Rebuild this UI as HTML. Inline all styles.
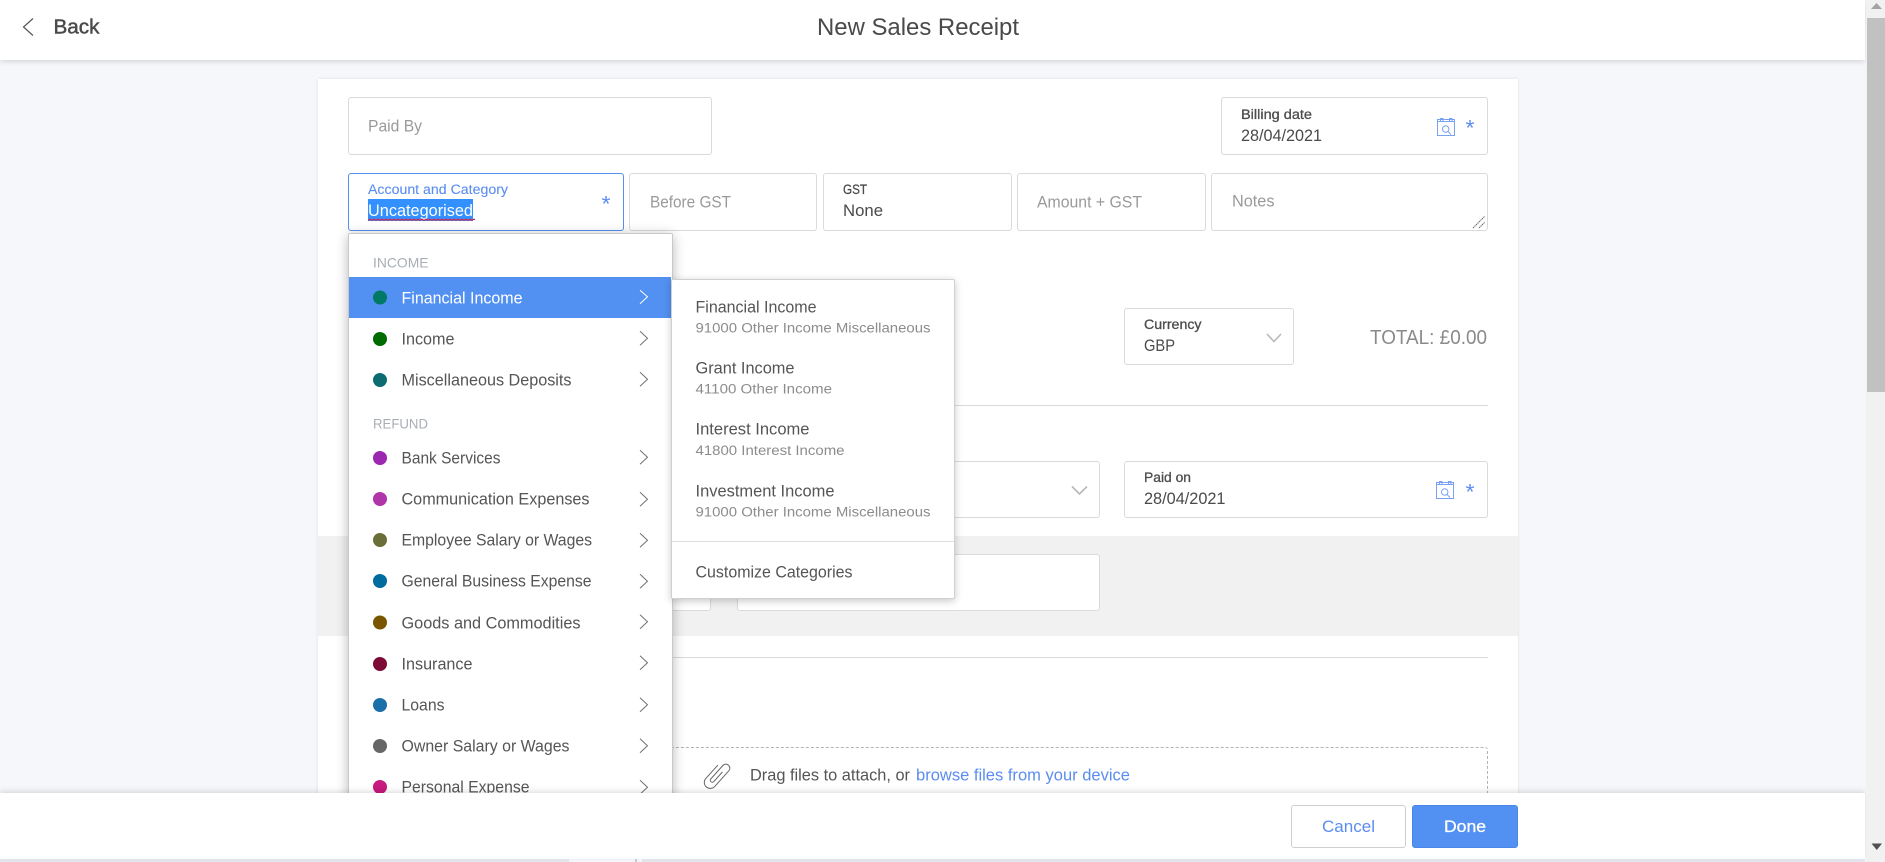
<!DOCTYPE html>
<html lang="en">
<head>
<meta charset="utf-8">
<title>New Sales Receipt</title>
<style>
html,body{margin:0;padding:0;width:1885px;height:862px;overflow:hidden;background:#f5f7fb;font-family:"Liberation Sans",sans-serif}
.a{position:absolute;box-sizing:border-box}
.f{background:#fff;border:1px solid #dadada;border-radius:3px}
svg{position:absolute;left:0;top:0;width:1885px;height:862px;overflow:visible;pointer-events:none}
text{font-family:"Liberation Sans",sans-serif;font-size:16.4px;fill:#4a4a4a}
.p{fill:#9a9a9a}
.l{font-size:13.4px;fill:#4d4d4d;stroke:#4d4d4d;stroke-width:.3px}
.h{font-size:14px;fill:#a8aeb5}.s{font-size:14.2px;fill:#8c8c8c}.m{fill:#555}
.b{fill:#5b8df0}.st{font-size:22px;fill:#5b8df0}
</style>
</head>
<body>
<div class="a" style="left:318px;top:79px;width:1200px;height:760px;background:#fff;box-shadow:0 0 3px rgba(0,0,0,.1)"></div>
<div class="a" style="left:0;top:0;width:1865px;height:60px;background:#fff;box-shadow:0 2px 5px rgba(0,0,0,.13)"></div>
<div class="a f" style="left:348px;top:97px;width:364px;height:58px"></div>
<div class="a f" style="left:1221px;top:97px;width:267px;height:58px"></div>
<div class="a" style="left:348px;top:173px;width:276px;height:58px;background:#fff;border:1px solid #5590f0;border-radius:3px"></div>
<div class="a f" style="left:629px;top:173px;width:188px;height:58px"></div>
<div class="a f" style="left:823px;top:173px;width:189px;height:58px"></div>
<div class="a f" style="left:1017px;top:173px;width:189px;height:58px"></div>
<div class="a f" style="left:1211px;top:173px;width:277px;height:58px"></div>
<div class="a f" style="left:1124px;top:308px;width:170px;height:57px"></div>
<div class="a" style="left:348px;top:405px;width:1140px;height:1px;background:#dadada"></div>
<div class="a f" style="left:348px;top:461px;width:752px;height:57px"></div>
<div class="a f" style="left:1124px;top:461px;width:364px;height:57px"></div>
<div class="a" style="left:318px;top:536px;width:1200px;height:100px;background:#f1f1f1"></div>
<div class="a f" style="left:500px;top:554px;width:211px;height:57px"></div>
<div class="a f" style="left:737px;top:554px;width:363px;height:57px"></div>
<div class="a" style="left:348px;top:657px;width:1140px;height:1px;background:#dadada"></div>
<div class="a" style="left:348px;top:747px;width:1140px;height:90px;border:1px dashed #aeb4ba;border-radius:3px"></div>

<svg viewBox="0 0 1885 862">
<path d="M33 18.5L23.5 27L33 35.5" fill="none" stroke="#555" stroke-width="1.2"/>
<text x="53.5" y="33.5" textLength="46" lengthAdjust="spacingAndGlyphs" style="font-size:20px;fill:#4a4a4a;stroke:#4a4a4a;stroke-width:.45px">Back</text>
<text x="817" y="35" textLength="202" lengthAdjust="spacingAndGlyphs" style="font-size:24.5px;fill:#4a4a4a">New Sales Receipt</text>
<text class="p" x="368" y="131.5" textLength="54" lengthAdjust="spacingAndGlyphs">Paid By</text>
<text class="l" x="1241" y="119" textLength="71" lengthAdjust="spacingAndGlyphs">Billing date</text>
<text x="1241" y="141" textLength="81" lengthAdjust="spacingAndGlyphs">28/04/2021</text>
<g fill="none" stroke="#7aa2f4" stroke-width="1">
<rect x="1437.5" y="119.5" width="17" height="16"/><path d="M1437.5 121.5H1454.5M1440.5 118.5h2.5v3h-2.5zM1449.5 118.5h2.5v3h-2.5z"/><circle cx="1445.7" cy="129" r="3.2"/><path d="M1448 131.5L1451 134.5"/>
<rect x="1436.5" y="482.5" width="17" height="16"/><path d="M1436.5 484.5H1453.5M1439.5 481.5h2.5v3h-2.5zM1448.5 481.5h2.5v3h-2.5z"/><circle cx="1444.7" cy="492" r="3.2"/><path d="M1447 494.5L1450 497.5"/>
</g>
<text class="st" x="1465.5" y="135.5" textLength="9" lengthAdjust="spacingAndGlyphs">*</text>
<text class="l" x="368" y="194" textLength="140" lengthAdjust="spacingAndGlyphs" style="fill:#5b8df0;stroke:#5b8df0;stroke-width:.1px">Account and Category</text>
<rect x="368" y="199" width="105" height="22" fill="#3390ff"/>
<text x="368" y="216" textLength="105" lengthAdjust="spacingAndGlyphs" style="fill:#fff">Uncategorised</text>
<path d="M368 220.5l2-1.5 2 1.5 2-1.5 2 1.5 2-1.5 2 1.5 2-1.5 2 1.5 2-1.5 2 1.5 2-1.5 2 1.5 2-1.5 2 1.5 2-1.5 2 1.5 2-1.5 2 1.5 2-1.5 2 1.5 2-1.5 2 1.5 2-1.5 2 1.5 2-1.5 2 1.5 2-1.5 2 1.5 2-1.5 2 1.5 2-1.5 2 1.5 2-1.5 2 1.5 2-1.5 2 1.5 2-1.5 2 1.5 2-1.5 2 1.5 2-1.5 2 1.5 2-1.5 2 1.5 2-1.5 2 1.5 2-1.5 2 1.5 2-1.5 2 1.5 2-1.5 2 1.5 2-1.5 1 .75" fill="none" stroke="#e0203a" stroke-width="1"/>
<text class="st" x="601.5" y="211.5" textLength="9" lengthAdjust="spacingAndGlyphs">*</text>
<text class="p" x="650" y="207.5" textLength="81" lengthAdjust="spacingAndGlyphs">Before GST</text>
<text class="l" x="843" y="194" textLength="24" lengthAdjust="spacingAndGlyphs">GST</text>
<text x="843" y="216" textLength="40" lengthAdjust="spacingAndGlyphs">None</text>
<text class="p" x="1037" y="207.5" textLength="105" lengthAdjust="spacingAndGlyphs">Amount + GST</text>
<text class="p" x="1232" y="206.5" textLength="42.5" lengthAdjust="spacingAndGlyphs">Notes</text>
<path d="M1473 228L1485 216M1479 228L1485 222" stroke="#666" stroke-width="1" stroke-dasharray="1.5 .6" fill="none"/>
<text class="l" x="1144" y="329" textLength="57.5" lengthAdjust="spacingAndGlyphs">Currency</text>
<text x="1144" y="351" textLength="31" lengthAdjust="spacingAndGlyphs">GBP</text>
<path d="M1267 334L1274 341.5L1281 334" fill="none" stroke="#b8b8b8" stroke-width="1.6"/>
<text x="1370" y="344" textLength="117" lengthAdjust="spacingAndGlyphs" style="font-size:20.5px;fill:#8a8a8a">TOTAL: £0.00</text>
<path d="M1072 486.5L1079.5 494L1087 486.5" fill="none" stroke="#b8b8b8" stroke-width="1.6"/>
<text class="l" x="1144" y="482" textLength="47" lengthAdjust="spacingAndGlyphs">Paid on</text>
<text x="1144" y="504" textLength="81.5" lengthAdjust="spacingAndGlyphs">28/04/2021</text>
<text class="st" x="1465.5" y="499.5" textLength="9" lengthAdjust="spacingAndGlyphs">*</text>
<g transform="translate(717 775) rotate(42)"><path d="M-6-8V10a6 6 0 0 0 12 0V-11a4 4 0 0 0-8 0V7a2 2 0 0 0 4 0V-6" fill="none" stroke="#666" stroke-width="1"/></g>
<text class="m" x="750" y="780.5" textLength="160" lengthAdjust="spacingAndGlyphs">Drag files to attach, or</text>
<text class="b" x="916" y="780.5" textLength="214" lengthAdjust="spacingAndGlyphs">browse files from your device</text>
</svg>

<div class="a" style="left:348px;top:233px;width:325px;height:600px;background:#fff;border:1px solid #c9c9c9;border-radius:2px;box-shadow:0 2px 12px rgba(0,0,0,.28)"></div>
<div class="a" style="left:349px;top:277px;width:322px;height:41px;background:#5290f2"></div>
<svg viewBox="0 0 1885 862">
<text class="h" x="373" y="267.5" textLength="55.5" lengthAdjust="spacingAndGlyphs">INCOME</text>
<text class="h" x="373" y="428.5" textLength="55" lengthAdjust="spacingAndGlyphs">REFUND</text>
<circle cx="380" cy="297.5" r="7" fill="#007a66"/>
<circle cx="380" cy="339" r="7" fill="#006b00"/>
<circle cx="380" cy="380" r="7" fill="#0e6b70"/>
<circle cx="380" cy="458" r="7" fill="#9c27b0"/>
<circle cx="380" cy="499" r="7" fill="#b035a8"/>
<circle cx="380" cy="540" r="7" fill="#6b6e36"/>
<circle cx="380" cy="581" r="7" fill="#006b9e"/>
<circle cx="380" cy="622.5" r="7" fill="#7a5500"/>
<circle cx="380" cy="664" r="7" fill="#7d0a35"/>
<circle cx="380" cy="705" r="7" fill="#1a6fa8"/>
<circle cx="380" cy="746" r="7" fill="#666"/>
<circle cx="380" cy="787" r="7" fill="#c7197f"/>
<text x="401.5" y="303.5" textLength="121" lengthAdjust="spacingAndGlyphs" style="fill:#fff">Financial Income</text>
<text class="m" x="401.5" y="344.5" textLength="53" lengthAdjust="spacingAndGlyphs">Income</text>
<text class="m" x="401.5" y="385.5" textLength="170" lengthAdjust="spacingAndGlyphs">Miscellaneous Deposits</text>
<text class="m" x="401.5" y="463.5" textLength="99" lengthAdjust="spacingAndGlyphs">Bank Services</text>
<text class="m" x="401.5" y="504.5" textLength="188" lengthAdjust="spacingAndGlyphs">Communication Expenses</text>
<text class="m" x="401.5" y="545.5" textLength="190.5" lengthAdjust="spacingAndGlyphs">Employee Salary or Wages</text>
<text class="m" x="401.5" y="586.5" textLength="190" lengthAdjust="spacingAndGlyphs">General Business Expense</text>
<text class="m" x="401.5" y="628.5" textLength="179" lengthAdjust="spacingAndGlyphs">Goods and Commodities</text>
<text class="m" x="401.5" y="669.5" textLength="71" lengthAdjust="spacingAndGlyphs">Insurance</text>
<text class="m" x="401.5" y="710.5" textLength="43" lengthAdjust="spacingAndGlyphs">Loans</text>
<text class="m" x="401.5" y="751.5" textLength="168" lengthAdjust="spacingAndGlyphs">Owner Salary or Wages</text>
<text class="m" x="401.5" y="792.5" textLength="128" lengthAdjust="spacingAndGlyphs">Personal Expense</text>
<g fill="none" stroke="#707070" stroke-width="1" transform="translate(0 -.7)">
<path d="M640 291L647.5 297.5L640 304.5" stroke="#fff"/>
<path d="M640 332L647.5 339L640 346"/>
<path d="M640 373L647.5 380L640 387"/>
<path d="M640 451L647.5 458L640 465"/>
<path d="M640 493L647.5 500L640 507"/>
<path d="M640 534L647.5 541L640 548"/>
<path d="M640 575L647.5 582L640 589"/>
<path d="M640 615.5L647.5 622.5L640 629.5"/>
<path d="M640 656.5L647.5 663.5L640 670.5"/>
<path d="M640 698.5L647.5 705.5L640 712.5"/>
<path d="M640 739.5L647.5 746.5L640 753.5"/>
<path d="M640 781L647.5 788L640 795"/>
</g>
</svg>

<div class="a" style="left:671px;top:279px;width:284px;height:320px;background:#fff;border:1px solid #d0d0d0;border-radius:2px;box-shadow:0 2px 8px rgba(0,0,0,.22)"></div>
<div class="a" style="left:672px;top:541px;width:282px;height:1px;background:#dedede"></div>
<svg viewBox="0 0 1885 862">
<text class="m" x="695.5" y="312.5" textLength="121" lengthAdjust="spacingAndGlyphs">Financial Income</text>
<text class="s" x="695.5" y="332.5" textLength="235" lengthAdjust="spacingAndGlyphs">91000 Other Income Miscellaneous</text>
<text class="m" x="695.5" y="373.5" textLength="99" lengthAdjust="spacingAndGlyphs">Grant Income</text>
<text class="s" x="695.5" y="393.5" textLength="136.5" lengthAdjust="spacingAndGlyphs">41100 Other Income</text>
<text class="m" x="695.5" y="434.5" textLength="114" lengthAdjust="spacingAndGlyphs">Interest Income</text>
<text class="s" x="695.5" y="455" textLength="149" lengthAdjust="spacingAndGlyphs">41800 Interest Income</text>
<text class="m" x="695.5" y="496.5" textLength="139" lengthAdjust="spacingAndGlyphs">Investment Income</text>
<text class="s" x="695.5" y="516.5" textLength="235" lengthAdjust="spacingAndGlyphs">91000 Other Income Miscellaneous</text>
<text class="m" x="695.5" y="577.5" textLength="157" lengthAdjust="spacingAndGlyphs">Customize Categories</text>
</svg>

<div class="a" style="left:0;top:859px;width:1865px;height:3px;background:#e4e8ee"></div>
<div class="a" style="left:569px;top:859px;width:66px;height:3px;background:#f4f6fb"></div>
<div class="a" style="left:635px;top:859px;width:2px;height:3px;background:#ccc"></div>
<div class="a" style="left:637px;top:859px;width:5px;height:3px;background:#f4f6fb"></div>
<div class="a" style="left:0;top:793px;width:1865px;height:66px;background:#fff;box-shadow:0 -2px 5px rgba(0,0,0,.12)"></div>
<div class="a" style="left:1291px;top:805px;width:115px;height:43px;background:#fff;border:1px solid #cfcfcf;border-radius:3px"></div>
<div class="a" style="left:1412px;top:805px;width:106px;height:43px;background:#5290f2;border:1px solid #4a86e8;border-radius:3px"></div>
<svg viewBox="0 0 1885 862">
<text class="b" x="1322" y="832" textLength="53" lengthAdjust="spacingAndGlyphs">Cancel</text>
<text x="1444" y="832" textLength="42" lengthAdjust="spacingAndGlyphs" style="fill:#fff;stroke:#fff;stroke-width:.3px">Done</text>
</svg>

<div class="a" style="left:1866px;top:0;width:19px;height:862px;background:#f1f1f1"></div>
<div class="a" style="left:1867px;top:18px;width:18px;height:374px;background:#c1c1c1"></div>
<svg viewBox="0 0 1885 862">
<path d="M1876.5 3L1882 9H1871Z" fill="#a3a3a3"/>
<path d="M1871.5 843.5H1882L1876.8 850Z" fill="#505050"/>
</svg>
</body>
</html>
